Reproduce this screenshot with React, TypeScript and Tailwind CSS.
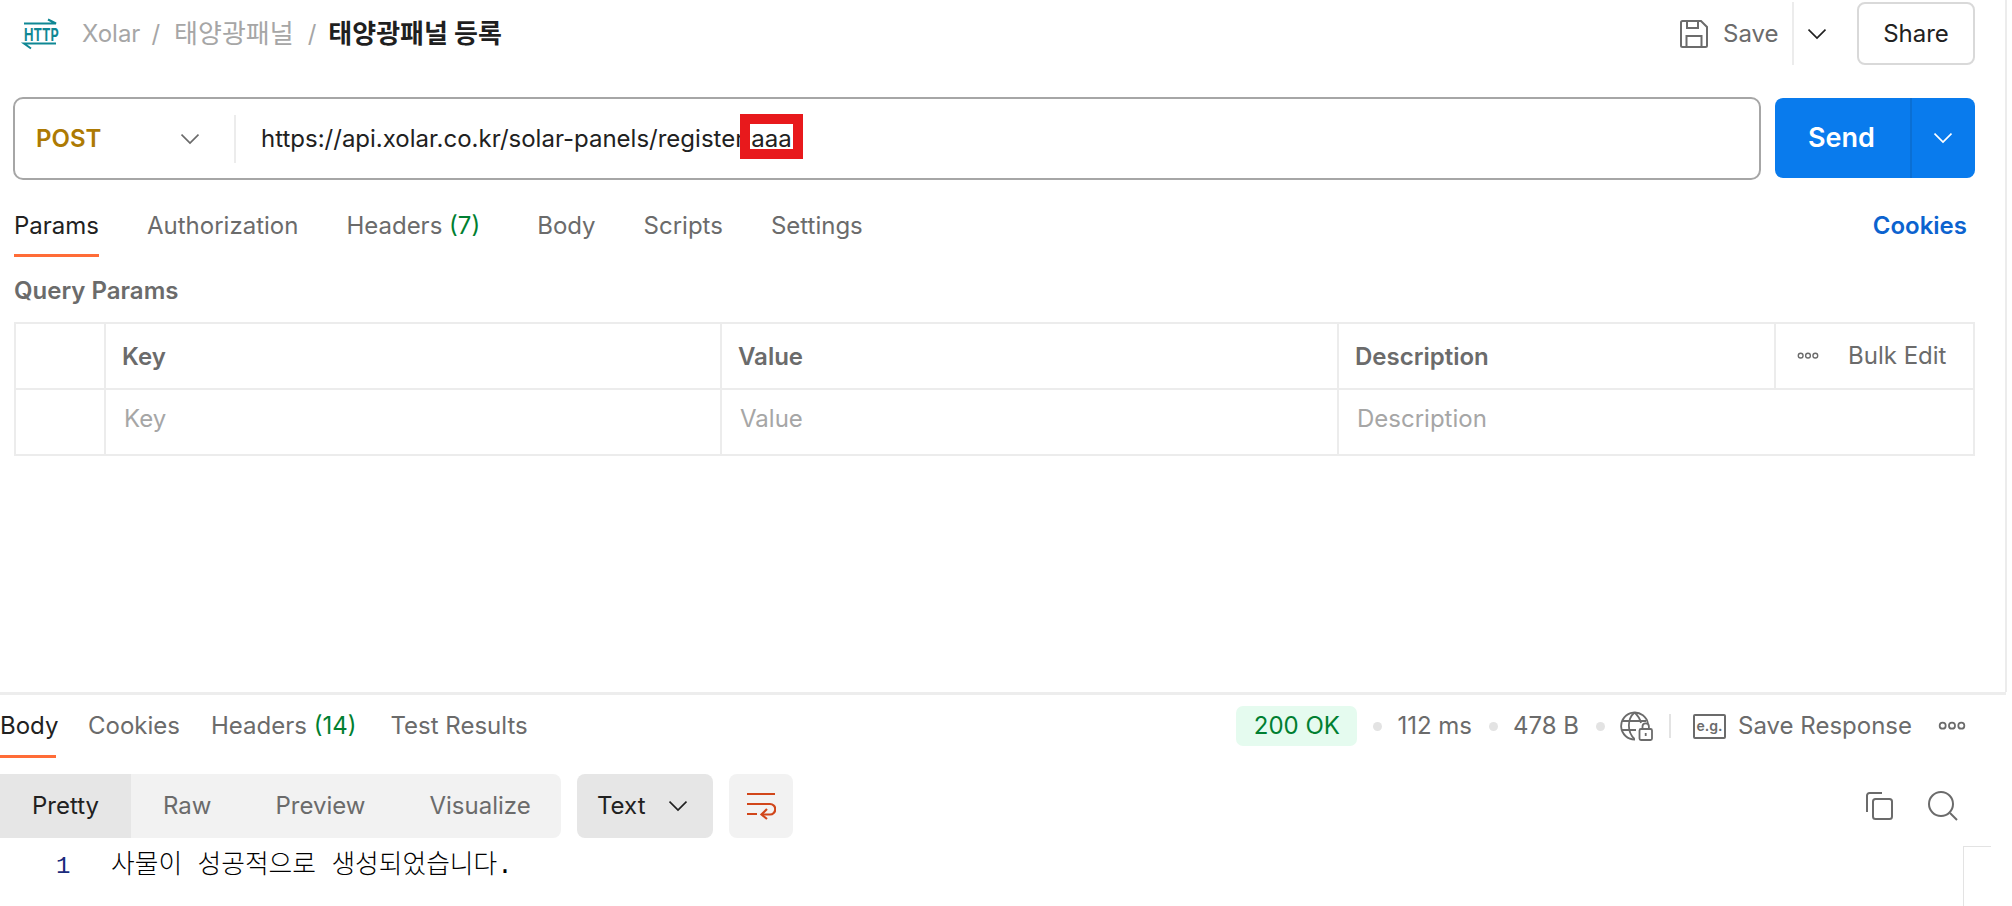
import React from 'react';

const Chevron = ({ className, size = 18 }: { className?: string; size?: number }) => (
  <svg width={size} height={size} viewBox="0 0 18 18" fill="none" className={className}>
    <path d="M.5 4.500 9 13l8.500-8.500" stroke="currentColor" strokeWidth="1.700" />
  </svg>
);

const Dots = ({ className, width = 28 }: { className?: string; width?: number }) => (
  <svg width={width} height={(width * 8) / 24} viewBox="0 0 24 8" fill="none" className={className}>
    <circle cx="4" cy="4" r="2.6" stroke="currentColor" strokeWidth="1.5" />
    <circle cx="12" cy="4" r="2.6" stroke="currentColor" strokeWidth="1.5" />
    <circle cx="20" cy="4" r="2.6" stroke="currentColor" strokeWidth="1.5" />
  </svg>
);

const HttpIcon = () => (
  <svg width="36" height="34" viewBox="0 0 36 34" fill="none" className="text-[#0f8794] overflow-visible">
    <path d="M2 6.500h32L26 2.500M34 26.500H2l7 5" stroke="currentColor" strokeWidth="2" />
    <text transform="translate(2 24) scale(1.060 1.500)" fontSize="12" fontWeight="700" fontFamily="Inter, sans-serif" fill="currentColor">HTTP</text>
  </svg>
);

const SaveIcon = () => (
  <svg width="28" height="28" viewBox="0 0 28 28" fill="none" className="text-[#6b6b6b]">
    <path d="M1 2.500A1.500 1.500 0 0 1 2.500 1h18.500L27 7v18.500a1.500 1.500 0 0 1-1.500 1.500h-23A1.500 1.500 0 0 1 1 25.500z" stroke="currentColor" strokeWidth="2" />
    <path d="M7 1v7h11V1M6.500 27V16h15v11" stroke="currentColor" strokeWidth="2" />
  </svg>
);

const GlobeLock = () => (
  <svg width="34" height="30" viewBox="0 0 34 30" fill="none" className="text-[#6b6b6b]">
    <path d="M15 28.500A13.500 13.500 0 1 1 28 13" stroke="currentColor" strokeWidth="1.800" />
    <path d="M14.500 1.500C7 8 7 21 14.500 28M14.500 1.500C18 4.500 20 8 21 12M2 10h24M2 19h14" stroke="currentColor" strokeWidth="1.800" />
    <rect x="19.500" y="18" width="12.500" height="11" rx="1.500" fill="white" stroke="currentColor" strokeWidth="1.800" />
    <path d="M22.500 18v-2.500a3.200 3.200 0 0 1 6.400 0V18" stroke="currentColor" strokeWidth="1.800" />
    <path d="M25.700 22v3" stroke="currentColor" strokeWidth="1.800" />
  </svg>
);

const WrapIcon = () => (
  <svg width="30" height="28" viewBox="0 0 30 28" fill="none" className="text-[#d1461a]">
    <path d="M1 2h28M1 12h23a4.500 4.500 0 0 1 0 10.500H16M1 22h10" stroke="currentColor" strokeWidth="2.200" />
    <path d="M21 17l-5.500 5.500L21 27" stroke="currentColor" strokeWidth="2.200" />
  </svg>
);

const CopyIcon = () => (
  <svg width="28" height="28" viewBox="0 0 28 28" fill="none" className="text-[#6b6b6b]">
    <path d="M2 20V3.500A2.500 2.500 0 0 1 4.500 1H17" stroke="currentColor" strokeWidth="2" />
    <rect x="8" y="7" width="19" height="20" rx="2.500" stroke="currentColor" strokeWidth="2" />
  </svg>
);

const SearchIcon = () => (
  <svg width="30" height="30" viewBox="0 0 30 30" fill="none" className="text-[#6b6b6b]">
    <circle cx="13" cy="13" r="12" stroke="currentColor" strokeWidth="2" />
    <path d="M22 22l7 7" stroke="currentColor" strokeWidth="2" />
  </svg>
);

const Sep = ({ className }: { className?: string }) => <span className={`block w-[9px] h-[9px] rounded-full bg-[#e3e3e3] ${className}`} />;

export default function App() {
  return (
    <div className="w-[2012px] h-[906px] overflow-hidden bg-white text-[24px] leading-[30px] text-[#6b6b6b] font-['Inter',sans-serif]">
      <div className="w-[2007px] h-[692px] border-r-2 border-[#ececec] flex flex-col">
        {/* top bar */}
        <div className="h-[67px] pt-[2px] flex items-start">
          <div className="flex items-center h-[63px] pl-[22px]">
            <HttpIcon />
            <span className="ml-[24px] text-[#a6a6a6]">Xolar</span>
            <span className="ml-[11px] text-[#a6a6a6]">/</span>
            <span className="ml-[14px] text-[26px] text-[#a6a6a6] font-['Inter','Noto_Sans_CJK_KR',sans-serif]">태양광패널</span>
            <span className="ml-[14px] text-[#a6a6a6]">/</span>
            <span className="ml-[12px] text-[26px] text-[#1f1f1f] font-bold font-['Inter','Noto_Sans_CJK_KR',sans-serif]">태양광패널 등록</span>
          </div>
          <div className="ml-auto flex items-center h-[63px] mr-[30px]">
            <SaveIcon />
            <span className="ml-[15px] w-[69px]">Save</span>
            <span className="w-[2px] h-[63px] bg-[#ececec]" />
            <Chevron className="ml-[14px] text-[#212121]" />
            <button className="ml-[31px] w-[118px] h-[63px] rounded-[8px] border-2 border-[#d9d9d9] text-[#212121]">Share</button>
          </div>
        </div>

        {/* url bar */}
        <div className="h-[83px] mt-[30px] flex pl-[13px] pr-[30px]">
          <div className="w-[1748px] h-[83px] rounded-[10px] border-2 border-[#a6a6a6] flex items-center">
            <span className="ml-[21px] w-[145px] font-semibold text-[#ad7a03]">POST</span>
            <Chevron className="text-[#6b6b6b]" />
            <span className="ml-[35px] w-[2px] h-[48px] bg-[#ececec]" />
            <span className="ml-[25px] text-[#212121] whitespace-nowrap">
              https://api.xolar.co.kr/solar-panels/register
              <span className="inline-block ml-[6px] px-[1px] h-[25px] leading-[29px] bg-white outline-[10px] outline-[#e8191c]">aaa</span>
            </span>
          </div>
          <div className="ml-[14px] w-[200px] h-[80px] mt-[1px] rounded-[8px] bg-[#097bed] flex items-center text-white">
            <span className="w-[135px] pl-[33px] text-[27px] font-semibold">Send</span>
            <span className="w-[2px] h-full bg-[#0a6fd4]" />
            <Chevron className="ml-[22px]" />
          </div>
        </div>

        {/* request tabs */}
        <div className="h-[64px] mt-[16px] pl-[14px] pr-[38px] flex items-start">
          <div className="h-[61px] border-b-[3px] border-[#ff6c37] pt-[15px] text-[#212121]">Params</div>
          <div className="ml-[48px] pt-[15px]">Authorization</div>
          <div className="ml-[48px] pt-[15px]">Headers <span className="text-[#007f31]">(7)</span></div>
          <div className="ml-[57px] pt-[15px]">Body</div>
          <div className="ml-[48px] pt-[15px]">Scripts</div>
          <div className="ml-[48px] pt-[15px]">Settings</div>
          <div className="ml-auto pt-[15px] font-semibold text-[#0c63cf]">Cookies</div>
        </div>

        <div className="pl-[14px] mt-[18px] leading-[26px] font-semibold">Query Params</div>

        {/* params table */}
        <div className="mt-[18px] ml-[14px] w-[1961px] border-2 border-[#ececec]">
          <div className="grid grid-cols-[90px_616px_617px_437px_1fr] h-[66px] items-center border-b-2 border-[#ececec] font-semibold">
            <span className="h-full border-r-2 border-[#ececec]" />
            <span className="h-full flex items-center pl-[16px] pt-[2px] border-r-2 border-[#ececec]">Key</span>
            <span className="h-full flex items-center pl-[16px] pt-[2px] border-r-2 border-[#ececec]">Value</span>
            <span className="h-full flex items-center pl-[16px] pt-[2px] border-r-2 border-[#ececec]">Description</span>
            <span className="h-full flex items-center pl-[21px] font-normal whitespace-nowrap">
              <Dots width={22} />
              <span className="ml-[29px]">Bulk Edit</span>
            </span>
          </div>
          <div className="grid grid-cols-[90px_616px_617px_1fr] h-[64px] items-center text-[#a6a6a6]">
            <span className="h-full border-r-2 border-[#ececec]" />
            <span className="h-full flex items-center pl-[18px] pb-[6px] border-r-2 border-[#ececec]">Key</span>
            <span className="h-full flex items-center pl-[18px] pb-[6px] border-r-2 border-[#ececec]">Value</span>
            <span className="h-full flex items-center pl-[18px] pb-[6px]">Description</span>
          </div>
        </div>
      </div>

      {/* response */}
      <div className="w-[2006px] h-[214px] border-t-[3px] border-[#ededed]">
        <div className="h-[63px] flex items-start">
          <div className="w-[56px] h-[63px] border-b-[3px] border-[#ff6c37] pt-[16px] text-[#212121] whitespace-nowrap">Body</div>
          <div className="ml-[32px] pt-[16px]">Cookies</div>
          <div className="ml-[31px] pt-[16px]">Headers <span className="text-[#007f31]">(14)</span></div>
          <div className="ml-[34px] pt-[16px]">Test Results</div>
          <div className="ml-auto flex items-center h-[40px] mt-[11px] pr-[40px] whitespace-nowrap">
            <span className="w-[121px] h-[40px] rounded-[7px] bg-[#e5fbef] text-[#007f31] flex items-center justify-center">200 OK</span>
            <Sep className="ml-[16px]" />
            <span className="ml-[15px]">112 ms</span>
            <Sep className="ml-[17px]" />
            <span className="ml-[15px]">478 B</span>
            <Sep className="ml-[17px]" />
            <span className="ml-[15px]"><GlobeLock /></span>
            <span className="ml-[15px] w-[2px] h-[24px] bg-[#e3e3e3]" />
            <span className="ml-[22px] w-[33px] h-[25px] rounded-[2px] border-2 border-[#6b6b6b] flex items-center justify-center text-[14px] font-semibold">e.g.</span>
            <span className="ml-[12px]">Save Response</span>
            <Dots className="ml-[26px]" />
          </div>
        </div>

        <div className="mt-[16px] h-[64px] flex items-center">
          <div className="w-[561px] h-[64px] rounded-r-[8px] bg-[#f2f2f2] flex items-center">
            <span className="w-[131px] h-full bg-[#e6e6e6] text-[#212121] flex items-center justify-center">Pretty</span>
            <span className="ml-[32px]">Raw</span>
            <span className="ml-[64px]">Preview</span>
            <span className="ml-[64px]">Visualize</span>
          </div>
          <div className="ml-[16px] w-[136px] h-[64px] rounded-[8px] bg-[#e6e6e6] text-[#212121] flex items-center pl-[20px]">
            Text
            <Chevron className="ml-[23px]" />
          </div>
          <div className="ml-[16px] w-[64px] h-[64px] rounded-[8px] bg-[#f2f2f2] flex items-center justify-center">
            <WrapIcon />
          </div>
          <div className="ml-auto flex items-center pr-[48px]">
            <CopyIcon />
            <span className="ml-[35px]"><SearchIcon /></span>
          </div>
        </div>

        <div className="flex items-start">
          <div className="flex h-[58px] items-center flex-1 text-[#000000]">
            <span className="ml-[56px] w-[55px] text-[#1a2b7c] font-['Liberation_Mono',monospace]">1</span>
            <span className="text-[25.750px] font-['Liberation_Mono','Noto_Sans_CJK_KR',monospace] font-light whitespace-nowrap">사물이 성공적으로 생성되었습니다.</span>
          </div>
          <div className="mt-[8px] mr-[15px] w-[28px] h-[60px] border-l border-t border-[#e3e3e3]" />
        </div>
      </div>
    </div>
  );
}
